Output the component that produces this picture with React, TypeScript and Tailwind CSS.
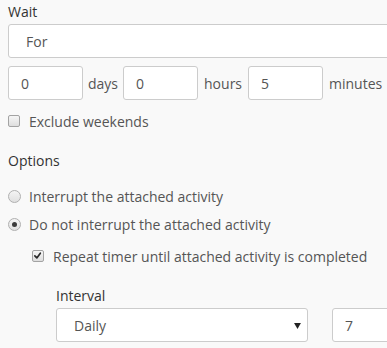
import React from "react";

const font = { fontFamily: '"Open Sans", "Noto Sans", sans-serif' };

function Checkbox({ checked }: { checked?: boolean }) {
  return (
    <span className="relative inline-block w-[12px] h-[12px] rounded-[2px] border border-[#a3a3a3] bg-gradient-to-b from-[#f6f6f6] to-[#dedede] shrink-0">
      {checked && (
        <svg viewBox="0 0 12 12" className="absolute left-[0px] top-[0px] w-[10px] h-[10px]">
          <path d="M2.2 5.8 L4.6 8.3 L8.8 2.6" fill="none" stroke="#2b2b2b" strokeWidth="2" strokeLinecap="round" strokeLinejoin="round" />
        </svg>
      )}
    </span>
  );
}

function Radio({ checked }: { checked?: boolean }) {
  return (
    <span className="relative inline-flex items-center justify-center w-[13px] h-[13px] rounded-full border border-[#b0b0b0] bg-gradient-to-b from-[#f4f4f4] to-[#e0e0e0] shrink-0">
      {checked && <span className="w-[5px] h-[5px] rounded-full bg-[#3a3a3a]" />}
    </span>
  );
}

function NumInput({ value }: { value: string }) {
  return (
    <div className="w-[75px] h-[34px] shrink-0 rounded-[3px] border border-[#cccccc] bg-white pl-[12px] flex items-center text-[14px] text-[#555]">
      {value}
    </div>
  );
}

export default function App() {
  return (
    <div style={font} className="w-[387px] h-[348px] overflow-hidden bg-[#f9f9f9] text-[14px] text-[#555] pl-[8px] pt-[2px]">
      <div className="h-[20px] leading-[20px] text-[#333] font-medium">Wait</div>
      <div className="mt-[2px] w-[420px] h-[34px] rounded-[3px] border border-[#cccccc] bg-white pl-[17px] flex items-center">For</div>
      <div className="mt-[8px] flex items-center h-[34px] whitespace-nowrap">
        <NumInput value="0" />
        <span className="px-[5px]">days</span>
        <NumInput value="0" />
        <span className="px-[6px]">hours</span>
        <NumInput value="5" />
        <span className="px-[6px]">minutes</span>
      </div>
      <div className="mt-[11px] h-[20px] flex items-center gap-[9px]">
        <Checkbox />
        <span>Exclude weekends</span>
      </div>
      <div className="mt-[20px] h-[20px] leading-[20px] text-[#333] font-medium">Options</div>
      <div className="mt-[15px] h-[20px] flex items-center gap-[8px]">
        <Radio />
        <span>Interrupt the attached activity</span>
      </div>
      <div className="mt-[8px] h-[20px] flex items-center gap-[8px]">
        <Radio checked />
        <span>Do not interrupt the attached activity</span>
      </div>
      <div className="mt-[12px] h-[20px] flex items-center gap-[9px] pl-[24px]">
        <Checkbox checked />
        <span>Repeat timer until attached activity is completed</span>
      </div>
      <div className="pl-[48px]">
        <div className="mt-[20px] h-[20px] leading-[20px] text-[#333] font-medium">Interval</div>
        <div className="mt-[2px] flex items-center gap-[24px]">
          <div className="relative w-[252px] shrink-0 h-[34px] rounded-[3px] border border-[#cccccc] bg-white pl-[17px] flex items-center">
            Daily
            <svg viewBox="0 0 8 7" className="absolute right-[6px] top-[14px] w-[7px] h-[6px]">
              <path d="M0 0 L8 0 L4 7 Z" fill="#222" />
            </svg>
          </div>
          <div className="w-[80px] h-[34px] shrink-0 rounded-[3px] border border-[#cccccc] bg-white pl-[12px] flex items-center">7</div>
        </div>
      </div>
    </div>
  );
}
